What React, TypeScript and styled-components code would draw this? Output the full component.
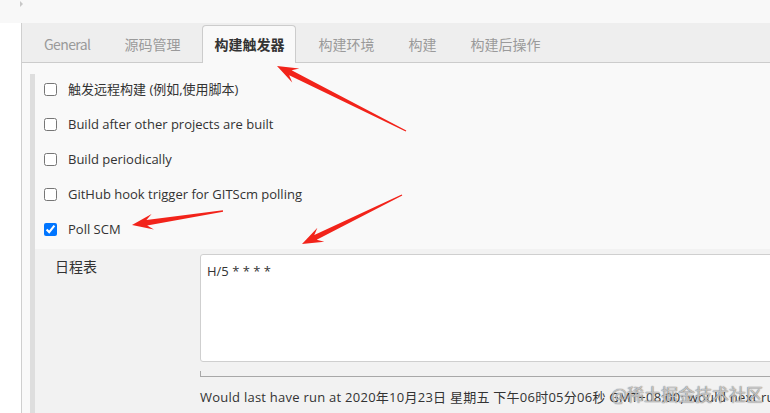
import React from 'react';
import styled, { createGlobalStyle } from 'styled-components';

const GlobalStyle = createGlobalStyle`
  html, body {
    margin: 0;
    padding: 0;
  }

  body {
    width: 770px;
    height: 413px;
    overflow: hidden;
    background: #f8f8f8;
    font-family: "Open Sans", "Noto Sans CJK SC", sans-serif;
    font-size: 13px;
    color: #333;
  }
`;

const Page = styled.div`
  position: relative;
  display: flex;
  flex-direction: column;
  width: 770px;
  height: 413px;
  overflow: hidden;
`;

const TopStrip = styled.div`
  height: 23px;
  padding: 1px 0 0 20px;
  box-sizing: border-box;
  background: #f8f8f8;

  .caret {
    display: block;
    width: 0;
    height: 0;
    border-top: 3px solid transparent;
    border-bottom: 3px solid transparent;
    border-left: 3px solid #c8c8c8;
  }
`;

const Body = styled.div`
  flex: 1;
  display: flex;
  min-height: 0;
`;

const Gutter = styled.div`
  width: 21px;
  flex-shrink: 0;
  background: #fff;
  border-right: 1px solid #cfcfcf;
`;

const Main = styled.div`
  flex: 1;
  min-width: 0;
  display: flex;
  flex-direction: column;
  background: #f9f9f9;
`;

const TabBar = styled.ul`
  display: flex;
  align-items: flex-end;
  gap: 10px;
  height: 40px;
  margin: 0;
  padding: 0 0 0 10px;
  box-sizing: border-box;
  list-style: none;
  background: #eeeeee;
  border-bottom: 1px solid #cccccc;
`;

const Tab = styled.li<{ $active?: boolean; $latin?: boolean }>`
  height: 38px;
  line-height: 37px;
  padding: 0 11px;
  margin-bottom: -1px;
  box-sizing: border-box;
  font-family: "Noto Sans CJK SC", "Open Sans", sans-serif;
  font-size: 14px;
  letter-spacing: ${p => (p.$latin ? '-0.6px' : '0')};
  white-space: nowrap;
  color: ${p => (p.$active ? '#333' : '#9a9a9a')};
  font-weight: ${p => (p.$active ? 700 : 400)};
  background: ${p => (p.$active ? '#f9f9f9' : 'transparent')};
  border: 1px solid ${p => (p.$active ? '#cccccc' : 'transparent')};
  border-bottom: none;
  border-radius: 4px 4px 0 0;
`;

const Content = styled.div`
  flex: 1;
  padding: 11px 0 0 8px;
`;

const Block = styled.div`
  height: 100%;
  border-left: 5px solid #dedede;
`;

const Row = styled.label`
  display: flex;
  align-items: flex-start;
  gap: 11px;
  height: 35px;
  padding: 9px 0 0 9px;
  box-sizing: border-box;
  white-space: nowrap;

  input {
    width: 13px;
    height: 13px;
    margin: 0;
    flex-shrink: 0;
  }

  span {
    line-height: 13px;
  }
`;

const Schedule = styled.div`
  display: grid;
  grid-template-columns: 165px 600px;
  height: 100%;
  background: #f2f2f2;
  padding-top: 5px;
  box-sizing: border-box;
`;

const FieldLabel = styled.div`
  padding: 6px 0 0 20px;
  font-size: 14px;
  line-height: 14px;
`;

const Field = styled.div`
  display: flex;
  flex-direction: column;
`;

const TextArea = styled.div`
  height: 108px;
  box-sizing: border-box;
  padding: 9px 6px;
  background: #fff;
  border: 1px solid #cfcfcf;
  border-radius: 3px;
  color: #333;
  font-size: 13px;
  line-height: 15px;
`;

const Handle = styled.div`
  height: 5px;
  margin-top: 9px;
  border-left: 1px solid #a8a8a8;
  border-bottom: 1px solid #a8a8a8;
`;

const Info = styled.div`
  margin-top: 12px;
  font-size: 13px;
  line-height: 16px;
  letter-spacing: 0.25px;
  white-space: nowrap;
`;

const Watermark = styled.div`
  position: absolute;
  left: 611px;
  top: 383px;
  font-family: "Noto Sans CJK SC", sans-serif;
  font-size: 17px;
  line-height: 22px;
  color: rgba(255, 255, 255, 0.6);
  text-shadow: 0 0 1px rgba(80, 80, 80, 0.7), 0 0 1px rgba(80, 80, 80, 0.7);
  white-space: nowrap;
  pointer-events: none;
`;

const Overlay = styled.svg`
  position: absolute;
  left: 0;
  top: 0;
  pointer-events: none;
`;

function arrowPoints(x1: number, y1: number, x2: number, y2: number) {
  const dx = x2 - x1;
  const dy = y2 - y1;
  const len = Math.hypot(dx, dy);
  const ux = dx / len;
  const uy = dy / len;
  const nx = -uy;
  const ny = ux;
  const head = 21;
  const neck = 15;
  const shaftW = 2.7;
  const headW = 7.8;
  const tailW = 0.7;
  const p = (a: number, b: number) => `${a.toFixed(1)},${b.toFixed(1)}`;
  const bx = x2 - ux * head;
  const by = y2 - uy * head;
  const kx = x2 - ux * neck;
  const ky = y2 - uy * neck;
  return [
    p(x1 + nx * tailW, y1 + ny * tailW),
    p(kx + nx * shaftW, ky + ny * shaftW),
    p(bx + nx * headW, by + ny * headW),
    p(x2, y2),
    p(bx - nx * headW, by - ny * headW),
    p(kx - nx * shaftW, ky - ny * shaftW),
    p(x1 - nx * tailW, y1 - ny * tailW),
  ].join(' ');
}

const tabs = ['General', '源码管理', '构建触发器', '构建环境', '构建', '构建后操作'];

const triggers = [
  { label: '触发远程构建 (例如,使用脚本)', checked: false },
  { label: 'Build after other projects are built', checked: false },
  { label: 'Build periodically', checked: false },
  { label: 'GitHub hook trigger for GITScm polling', checked: false },
  { label: 'Poll SCM', checked: true },
];

const arrows: [number, number, number, number][] = [
  [406, 131, 277, 66],
  [223, 211, 132, 225],
  [402, 195, 302, 244],
];

export default function App() {
  return (
    <Page>
      <GlobalStyle />
      <TopStrip>
        <i className="caret" />
      </TopStrip>
      <Body>
        <Gutter />
        <Main>
          <TabBar>
            {tabs.map(t => (
              <Tab key={t} $active={t === '构建触发器'} $latin={/^[A-Za-z]+$/.test(t)}>
                {t}
              </Tab>
            ))}
          </TabBar>
          <Content>
            <Block>
              {triggers.map(t => (
                <Row key={t.label}>
                  <input type="checkbox" defaultChecked={t.checked} />
                  <span>{t.label}</span>
                </Row>
              ))}
              <Schedule>
                <FieldLabel>日程表</FieldLabel>
                <Field>
                  <TextArea>H/5 * * * *</TextArea>
                  <Handle />
                  <Info>
                    Would last have run at 2020年10月23日 星期五 下午06时05分06秒 GMT+08:00; would next run at
                    2020年10月23日 星期五 下午06时10分06秒 GMT+08:00.
                  </Info>
                </Field>
              </Schedule>
            </Block>
          </Content>
        </Main>
      </Body>
      <Watermark>@稀土掘金技术社区</Watermark>
      <Overlay width={770} height={413} viewBox="0 0 770 413">
        {arrows.map((a, i) => (
          <polygon key={i} points={arrowPoints(...a)} fill="#f2231a" />
        ))}
      </Overlay>
    </Page>
  );
}
